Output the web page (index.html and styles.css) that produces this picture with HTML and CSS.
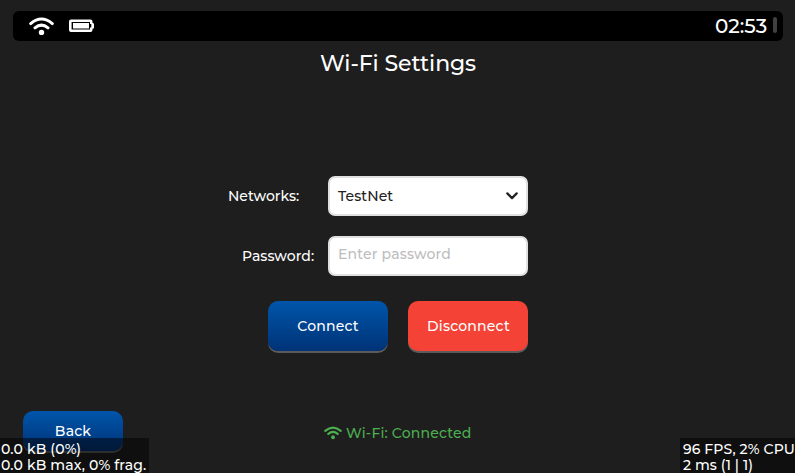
FILE: index.html
```html
<!DOCTYPE html>
<html lang="en">
<head>
<meta charset="utf-8">
<title>Wi-Fi Settings</title>
<link rel="stylesheet" href="styles.css">
</head>
<body>
<main class="screen">
  <header class="status-bar">
    <svg class="status-wifi" viewBox="0 0 25 19"><path d="M1.7 6.6Q12.5-2.6 23.3 6.6M6 10.8Q12.5 5.4 19 10.8" fill="none" stroke="#fff" stroke-width="3" stroke-linecap="round"/><circle cx="12.5" cy="15.4" r="2.7" fill="#fff"/></svg>
    <svg class="status-battery" viewBox="0 0 26 14"><path fill-rule="evenodd" d="M2 .5H21.5Q23.5 .5 23.5 2.5V4Q25 4 25 5.2V8.6Q25 9.8 23.5 9.8V11Q23.5 13 21.5 13H2Q0 13 0 11V2.5Q0 .5 2 .5ZM2.6 3V10.5H21V8.5H22.3V5H21V3Z" fill="#fff"/><path d="M4 4H20V9.5H4Z" fill="#fff"/></svg>
    <time class="clock">02:53</time>
    <span class="scroll-thumb"></span>
  </header>
  <h1 class="title">Wi-Fi Settings</h1>
  <form class="form">
    <div class="row">
      <label class="label">Networks:</label>
      <div class="field"><span>TestNet</span><svg class="chevron" viewBox="0 0 12 8"><path d="M1.3 1.4L6 6.1L10.7 1.4" fill="none" stroke="#212121" stroke-width="2.2" stroke-linecap="round" stroke-linejoin="round"/></svg></div>
    </div>
    <div class="row">
      <label class="label label-password">Password:</label>
      <div class="field field-input"><span class="placeholder">Enter password</span></div>
    </div>
    <div class="actions">
      <button class="button" type="button">Connect</button>
      <button class="button button-danger" type="button">Disconnect</button>
    </div>
  </form>
  <footer class="footer">
    <button class="button button-back" type="button">Back</button>
    <p class="connection"><svg class="connection-wifi" viewBox="0 0 25 19"><path d="M1.7 6.6Q12.5-2.6 23.3 6.6M6 10.8Q12.5 5.4 19 10.8" fill="none" stroke="#4caf50" stroke-width="3" stroke-linecap="round"/><circle cx="12.5" cy="15.4" r="2.7" fill="#4caf50"/></svg><span>Wi-Fi: Connected</span></p>
  </footer>
  <aside class="monitor monitor-memory"><div>0.0 kB (0%)</div><div>0.0 kB max, 0% frag.</div></aside>
  <aside class="monitor monitor-cpu"><div>96 FPS, 2% CPU</div><div>2 ms (1 | 1)</div></aside>
</main>
</body>
</html>
```
FILE: styles.css
```css
* { box-sizing: border-box; }
body {
  margin: 0;
  background: #1e1e1e;
  color: #fff;
  font: 500 14px/16px Montserrat, Inter, sans-serif;
}
span, time { white-space: nowrap; }
.screen {
  position: relative;
  width: 795px;
  height: 473px;
  padding-top: 11px;
  overflow: hidden;
  background: #1e1e1e;
}
.status-bar {
  display: flex;
  align-items: center;
  width: 770px;
  height: 30px;
  margin-left: 13px;
  padding: 0 6px 0 16px;
  border-radius: 6px;
  background: #000;
}
.status-wifi { width: 25px; height: 19px; }
.status-battery { width: 26px; height: 14px; margin-left: 15px; }
.clock { width: 53px; margin-left: auto; font-size: 20px; line-height: 24px; }
.scroll-thumb { width: 4px; height: 16px; margin: -2px 0 0 5px; border-radius: 2px; background: #404040; }
.title {
  width: 170px;
  margin: 9px 0 0 320px;
  font-size: 22px;
  line-height: 27px;
  font-weight: 500;
  letter-spacing: -0.1px;
}
.form { margin: 99px 0 0 228px; width: 300px; }
.row { display: flex; align-items: center; height: 40px; margin-bottom: 20px; }
.label { width: 100px; }
.label-password { padding-left: 14px; letter-spacing: 0.05px; }
.field {
  display: flex;
  align-items: center;
  justify-content: space-between;
  width: 200px;
  height: 40px;
  padding: 0 8px;
  border: 2px solid #e0e0e0;
  border-radius: 7px;
  background: #fff;
  color: #212121;
  letter-spacing: 0.1px;
}
.field-input { padding-bottom: 4px; color: #bdbdbd; }
.placeholder { letter-spacing: 0.17px; }
.chevron { width: 12px; height: 8px; }
.actions { display: flex; gap: 20px; padding: 5px 0 0 40px; }
.button {
  width: 120px;
  height: 50px;
  padding: 0;
  border: 0;
  border-radius: 10px;
  background: linear-gradient(#0055aa, #003377);
  box-shadow: 0 2px 0 #5b5b5b;
  color: #fff;
  font: inherit;
  letter-spacing: 0.2px;
}
.button-danger { padding-left: 1px; background: #f44336; }
.footer { display: flex; margin: 60px 0 0 23px; }
.button-back { width: 100px; height: 40px; }
.connection {
  display: flex;
  align-items: center;
  height: 16px;
  margin: 14px 0 0 201px;
  color: #4caf50;
  letter-spacing: 0.18px;
}
.connection-wifi { width: 18px; height: 14px; margin-right: 4px; }
.monitor {
  position: absolute;
  bottom: 0;
  height: 35px;
  padding-top: 3px;
  background: rgba(0, 0, 0, .5);
  white-space: nowrap;
  letter-spacing: 0.15px;
}
.monitor-memory { left: 0; width: 149px; padding-left: 1px; }
.monitor-cpu { right: 0; width: 115px; padding-left: 3px; letter-spacing: 0.08px; }
```
